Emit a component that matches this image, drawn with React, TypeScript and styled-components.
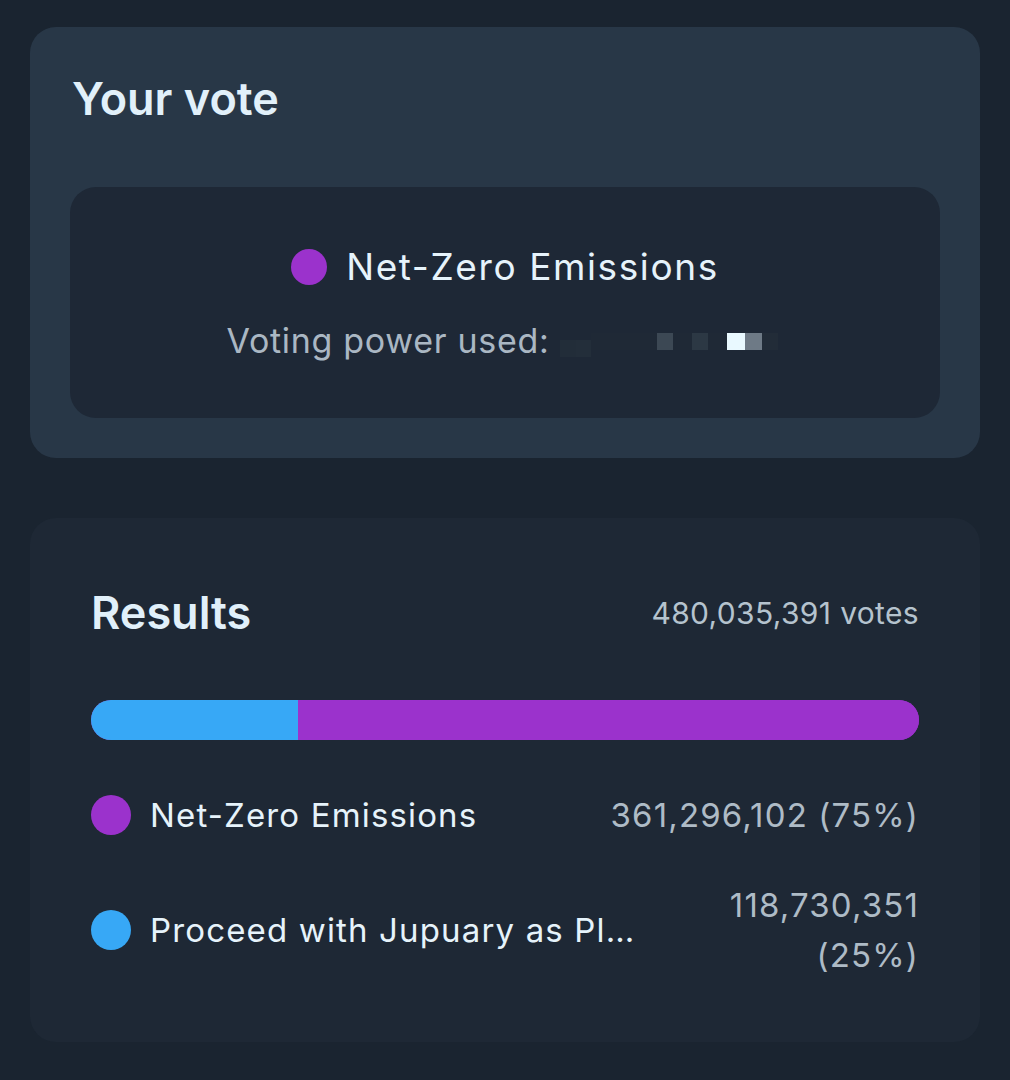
import styled, { createGlobalStyle } from 'styled-components';

type Option = {
  label: string;
  votes: string;
  share: number;
  color: string;
};

const OPTIONS: Option[] = [
  { label: 'Net-Zero Emissions', votes: '361,296,102', share: 75, color: '#9b32cc' },
  { label: 'Proceed with Jupuary as Planned', votes: '118,730,351', share: 25, color: '#37a8f6' },
];

const GlobalStyle = createGlobalStyle`
  body {
    margin: 0;
    background: #1a2430;
    font-family: Inter, "Noto Sans", sans-serif;
    -webkit-font-smoothing: antialiased;
  }
`;

const Page = styled.main`
  display: flex;
  flex-direction: column;
  gap: 60px;
  padding: 27px 30px 40px;
`;

const Card = styled.section<{ $tone: 'raised' | 'flat' }>`
  display: flex;
  flex-direction: column;
  border-radius: 26px;
  background: ${({ $tone }) => ($tone === 'raised' ? '#283747' : '#1e2835')};
  padding: ${({ $tone }) => ($tone === 'raised' ? '45px 40px 40px' : '68px 61px 62px')};
`;

const Title = styled.h2<{ $indent?: number }>`
  margin: 0;
  padding-left: ${({ $indent }) => $indent ?? 0}px;
  font-size: 45px;
  font-weight: 600;
  line-height: 53px;
  color: #e1f0fa;
`;

const VoteBox = styled.div`
  margin-top: 62px;
  display: flex;
  flex-direction: column;
  align-items: center;
  gap: 31px;
  padding: 58px 24px 56px;
  border-radius: 26px;
  background: #1e2836;
`;

const ChoiceRow = styled.div`
  display: flex;
  align-items: center;
  gap: 19px;
  font-size: 37px;
  line-height: 44px;
  letter-spacing: 1.6px;
  color: #e6f3fb;
`;

const Dot = styled.span<{ $color: string; $size: number }>`
  flex: none;
  width: ${({ $size }) => $size}px;
  height: ${({ $size }) => $size}px;
  border-radius: 50%;
  background: ${({ $color }) => $color};
`;

const PowerRow = styled.div`
  display: flex;
  align-items: center;
  gap: 10px;
  font-size: 34px;
  line-height: 42px;
  letter-spacing: 0.7px;
  color: #aab7c3;
`;

// pixelated mask over the hidden amount
const Redacted = styled.span`
  display: flex;
  align-items: center;
  width: 224px;
  height: 42px;
`;

const Pixel = styled.span<{ $shade: string; $w: number; $dy: number }>`
  flex: none;
  width: ${({ $w }) => $w}px;
  height: 17px;
  margin-top: ${({ $dy }) => $dy}px;
  background: ${({ $shade }) => $shade};
`;

const ResultsHeader = styled.div`
  display: flex;
  align-items: center;
  justify-content: space-between;
`;

const Total = styled.span`
  font-size: 30px;
  letter-spacing: 0.35px;
  color: #b5c3ce;
`;

const Bar = styled.div`
  margin-top: 61px;
  display: flex;
  height: 40px;
  border-radius: 20px;
  overflow: hidden;
  background: #9b32cc;
`;

const Segment = styled.div<{ $color: string }>`
  height: 100%;
  background: ${({ $color }) => $color};
`;

const List = styled.ul`
  margin: 50px 0 0;
  padding: 0;
  list-style: none;
  display: flex;
  flex-direction: column;
  gap: 40px;
`;

const Item = styled.li`
  display: flex;
  align-items: center;
  gap: 19px;
  font-size: 33px;
  line-height: 50px;
  letter-spacing: 1.15px;
`;

const Label = styled.span`
  flex: 1 1 auto;
  min-width: 0;
  white-space: nowrap;
  overflow: hidden;
  text-overflow: ellipsis;
  color: #e6f3fb;
`;

const Amount = styled.span`
  flex: 0 1 auto;
  text-align: right;
  color: #aebbc6;
`;

const PIXELS = [
  { shade: '#222d39', w: 16, dy: 14 },
  { shade: '#232e3a', w: 15, dy: 14 },
  { shade: '#1f2936', w: 66, dy: 0 },
  { shade: '#3c4854', w: 16, dy: 0 },
  { shade: '#1f2936', w: 19, dy: 0 },
  { shade: '#2c3844', w: 16, dy: 0 },
  { shade: '#1f2936', w: 19, dy: 0 },
  { shade: '#e9f9ff', w: 18, dy: 0 },
  { shade: '#6e7a86', w: 17, dy: 0 },
  { shade: '#222c38', w: 16, dy: 0 },
];

export default function App() {
  const bySize = [...OPTIONS].sort((a, b) => a.share - b.share);

  return (
    <>
      <GlobalStyle />
      <Page>
        <Card $tone="raised">
          <Title $indent={2}>Your vote</Title>
          <VoteBox>
            <ChoiceRow>
              <Dot $color="#9b32cc" $size={36} />
              Net-Zero Emissions
            </ChoiceRow>
            <PowerRow>
              Voting power used:
              <Redacted aria-label="hidden amount">
                {PIXELS.map((p, i) => (
                  <Pixel key={i} $shade={p.shade} $w={p.w} $dy={p.dy} />
                ))}
              </Redacted>
            </PowerRow>
          </VoteBox>
        </Card>

        <Card $tone="flat">
          <ResultsHeader>
            <Title>Results</Title>
            <Total>480,035,391 votes</Total>
          </ResultsHeader>
          <Bar>
            {bySize.map((o) => (
              <Segment key={o.label} $color={o.color} style={{ width: `${o.share}%` }} />
            ))}
          </Bar>
          <List>
            {OPTIONS.map((o) => (
              <Item key={o.label}>
                <Dot $color={o.color} $size={40} />
                <Label>{o.label}</Label>
                <Amount>
                  {o.votes} ({o.share}%)
                </Amount>
              </Item>
            ))}
          </List>
        </Card>
      </Page>
    </>
  );
}
